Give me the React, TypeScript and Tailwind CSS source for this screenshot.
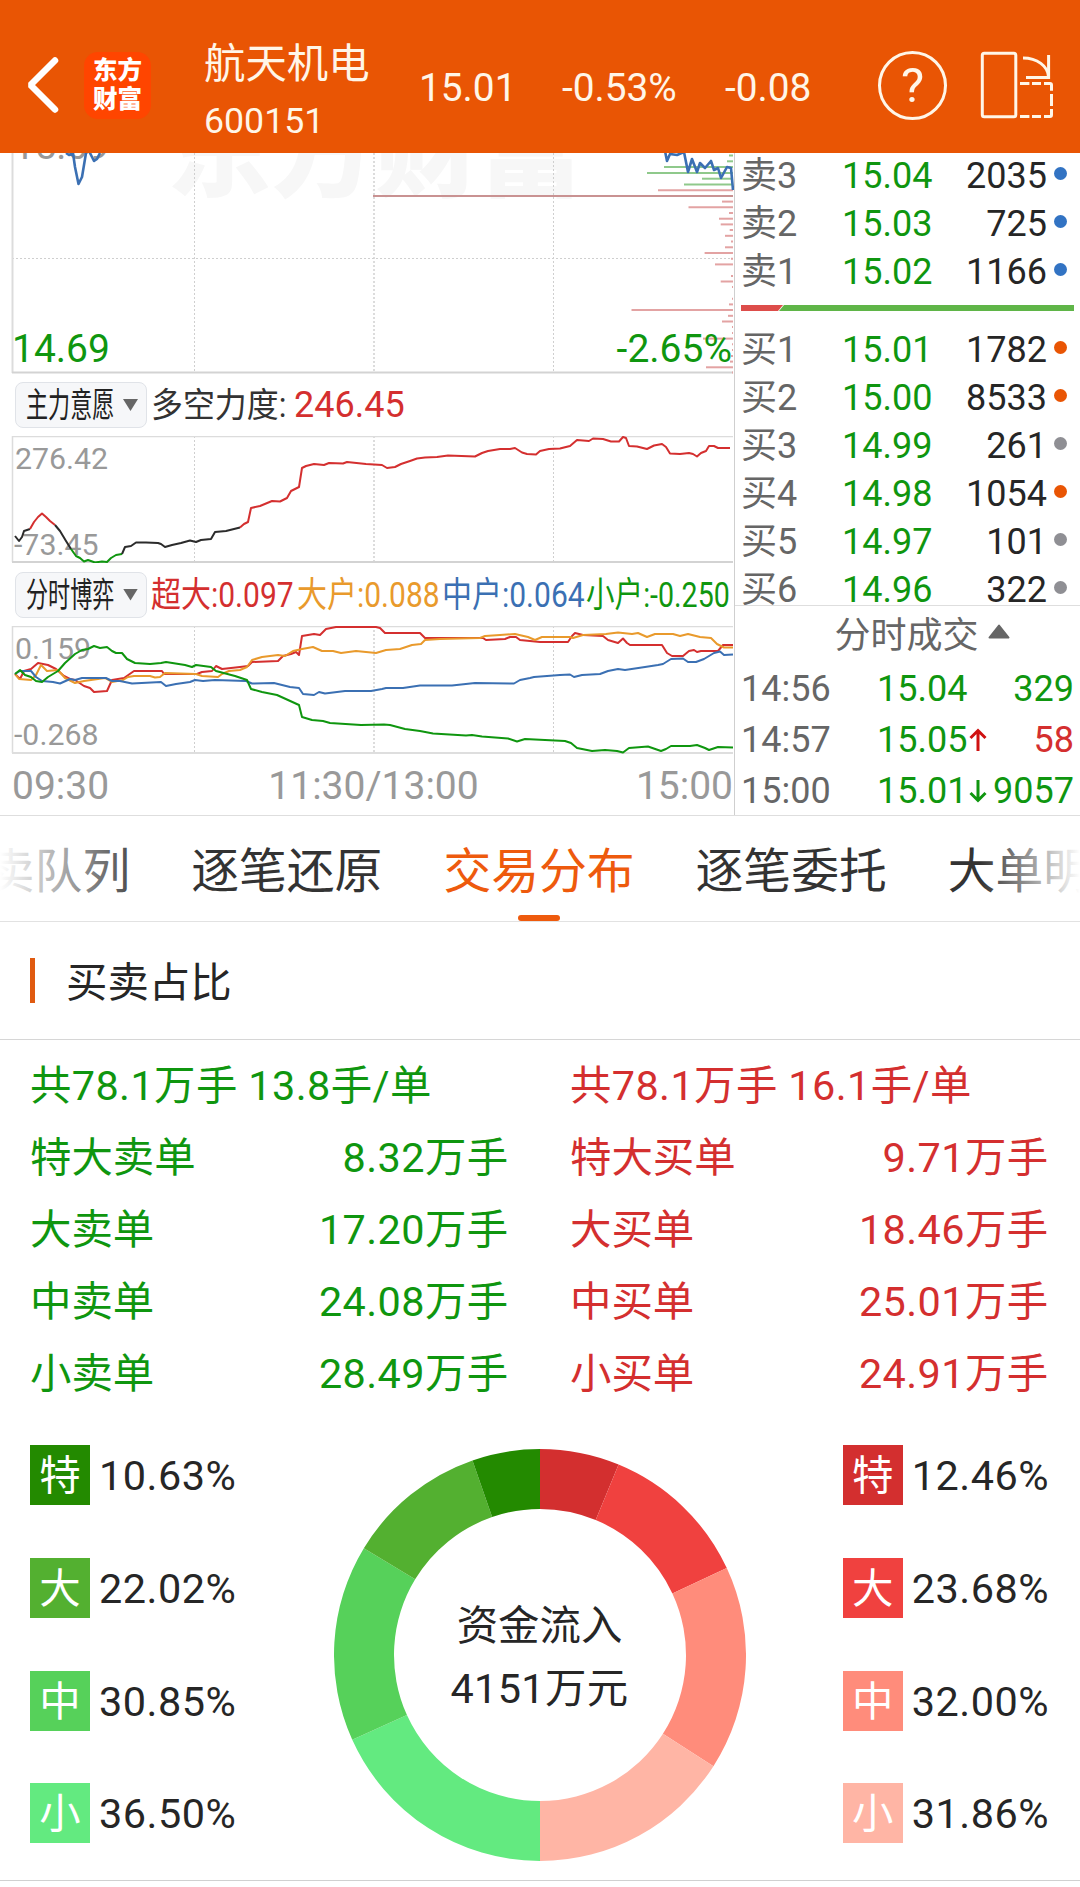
import React from 'react';

const GREEN = '#0f960f';
const RED = '#d42f2f';
const ORANGE = '#e99a2c';
const BLUE = '#3b70b3';

interface Quote {
  label: string;
  price: string;
  volume: string;
  dot: string;
}

const asks: Quote[] = [
  { label: '卖3', price: '15.04', volume: '2035', dot: 'bg-[#3273c3]' },
  { label: '卖2', price: '15.03', volume: '725', dot: 'bg-[#3273c3]' },
  { label: '卖1', price: '15.02', volume: '1166', dot: 'bg-[#3273c3]' },
];

const bids: Quote[] = [
  { label: '买1', price: '15.01', volume: '1782', dot: 'bg-[#e95504]' },
  { label: '买2', price: '15.00', volume: '8533', dot: 'bg-[#e95504]' },
  { label: '买3', price: '14.99', volume: '261', dot: 'bg-[#8f8f94]' },
  { label: '买4', price: '14.98', volume: '1054', dot: 'bg-[#e95504]' },
  { label: '买5', price: '14.97', volume: '101', dot: 'bg-[#8f8f94]' },
  { label: '买6', price: '14.96', volume: '322', dot: 'bg-[#8f8f94]' },
];

const trades = [
  { time: '14:56', price: '15.04', dir: '', volume: '329', color: 'text-[#0f960f]' },
  { time: '14:57', price: '15.05', dir: 'up', volume: '58', color: 'text-[#d42f2f]' },
  { time: '15:00', price: '15.01', dir: 'down', volume: '9057', color: 'text-[#0f960f]' },
];

const tabs = ['买卖队列', '逐笔还原', '交易分布', '逐笔委托', '大单明细'];

const sells = [
  ['特大卖单', '8.32万手'],
  ['大卖单', '17.20万手'],
  ['中卖单', '24.08万手'],
  ['小卖单', '28.49万手'],
];

const buys = [
  ['特大买单', '9.71万手'],
  ['大买单', '18.46万手'],
  ['中买单', '25.01万手'],
  ['小买单', '24.91万手'],
];

const sellShare = [
  { name: '特', value: 10.63, text: '10.63%', bg: 'bg-[#238a00]', fill: '#238a00' },
  { name: '大', value: 22.02, text: '22.02%', bg: 'bg-[#53b030]', fill: '#53b030' },
  { name: '中', value: 30.85, text: '30.85%', bg: 'bg-[#56d15a]', fill: '#56d15a' },
  { name: '小', value: 36.5, text: '36.50%', bg: 'bg-[#63ea80]', fill: '#63ea80' },
];

const buyShare = [
  { name: '特', value: 12.46, text: '12.46%', bg: 'bg-[#d32f2f]', fill: '#d32f2f' },
  { name: '大', value: 23.68, text: '23.68%', bg: 'bg-[#f0413f]', fill: '#f0413f' },
  { name: '中', value: 32.0, text: '32.00%', bg: 'bg-[#ff8c7b]', fill: '#ff8c7b' },
  { name: '小', value: 31.86, text: '31.86%', bg: 'bg-[#ffb5a5]', fill: '#ffb5a5' },
];

// [y, left end] of every price level bar, all of them end at x=733
const askBars = [[2.5, 729], [8.3, 727], [14, 664], [20, 647], [25.7, 702], [31.5, 684]];
const bidBars = [
  [37.2, 658], [43, 373], [48.6, 722], [54.3, 688.5], [60, 729], [65.7, 719], [71.4, 720.7],
  [77, 729.7], [82.8, 725], [88.5, 731], [94.3, 725], [100, 704.6], [105.7, 731], [111.4, 715],
  [123, 731], [128.5, 720.7], [134, 732], [145.7, 732], [151.4, 729], [157, 631.5], [162.8, 728],
  [168.5, 722], [174, 732], [180, 732], [185.6, 703], [191.3, 732], [197, 732], [203, 731],
  [208.6, 730], [214.3, 706], [219.5, 732],
];

const Header = () => (
  <header className="h-[153px] bg-[#e95504] text-[#fff6e8] flex items-end pl-[24px] pr-[24px]">
    <div className="flex items-center h-[68px] mb-[34px] w-full">
      <svg width="38" height="60" viewBox="0 0 38 60" fill="none" className="shrink-0">
        <path d="M31 5.5L6.5 30L31 54.5" stroke="#fff" strokeWidth="6.5" strokeLinecap="round" strokeLinejoin="bevel" />
      </svg>
      <div className="w-[67px] h-[67px] ml-[22px] shrink-0 rounded-[14px] bg-[#ff4500] text-white font-black text-[24.5px] leading-[29px] flex flex-col items-center justify-center">
        <span>东方</span>
        <span>财富</span>
      </div>
      <div className="ml-[53px] w-[215px] shrink-0 pt-[14px]">
        <div className="text-[41.4px] leading-[58px]">航天机电</div>
        <div className="text-[35.7px] leading-[56px]">600151</div>
      </div>
      <div className="w-[143px] shrink-0 text-[38.8px] mt-[6px]">15.01</div>
      <div className="w-[163px] shrink-0 text-[38.8px] mt-[6px]">-0.53%</div>
      <div className="w-[153px] shrink-0 text-[38.8px] mt-[6px]">-0.08</div>
      <div className="w-[69px] h-[69px] shrink-0 rounded-full border-[3px] border-[#fff6e8] flex items-center justify-center text-[49px] leading-none">
        ?
      </div>
      <svg width="76" height="70" viewBox="980 50 76 70" fill="none" stroke="#fff6e8" strokeWidth="3" className="ml-[32px] shrink-0">
        <rect x="983.3" y="53.3" width="33.5" height="63.5" rx="2" />
        <path d="M1024 58C1038 58 1049 66 1049.6 77" />
        <path d="M1049.6 55V77.5H1027" />
        <path d="M1021 83.5H1030.4M1033 83.5H1042M1045 83.5H1051Q1052.5 83.5 1052.5 85V90.7M1052.5 94V106M1052.5 109V115Q1052.5 116.5 1051 116.5H1045M1033 116.5H1042M1021 116.5H1030.4" />
      </svg>
    </div>
  </header>
);

const GridLines = ({ height }: { height: number }) => (
  <g stroke="#cfcfcf" strokeWidth="1" strokeDasharray="2 2">
    <path d={`M194.5 0V${height}`} />
    <path d={`M374 0V${height}`} stroke="#dcdcdc" strokeWidth="2" />
    <path d={`M553.5 0V${height}`} />
  </g>
);

const PriceChart = () => (
  <svg width="734" height="221" className="block shrink-0" fontFamily='Roboto, "Noto Sans CJK SC", sans-serif'>
    <text x="375" y="36" fontSize="104" fontWeight="900" fill="#f7f7f7" textAnchor="middle">东方财富</text>
    <GridLines height={219} />
    <path d="M12 105.5H733" stroke="#cfcfcf" strokeDasharray="2 2" />
    <path d="M12.5 0V220" stroke="#dcdcdc" strokeWidth="2" />
    <path d="M12 219.5H733" stroke="#d3d3d3" strokeWidth="2" />
    {askBars.map(([y, x]) => <path key={y} d={`M${x} ${y}H733`} stroke="#8fc98b" strokeWidth="2" />)}
    {bidBars.map(([y, x]) => <path key={y} d={`M${x} ${y}H733`} stroke="#e3a3a3" strokeWidth="2" />)}
    <path d="M373 43H733" stroke="#c99292" strokeWidth="2" />
    <text x="13" y="6" fontSize="38.5" fill="#999">15.09</text>
    <g fill="none" stroke={BLUE} strokeWidth="2.6" strokeLinejoin="round">
      <path d="M66 0L69 2L73 0L75 14L78.500 31L82 24L86 0L89 -2L92 4L94 8L97 6L100 0" />
      <path d="M665 -2L667 8L670 1L677 2L684 -1L688 19L692 6L697 19L700 10L705 15L711 8L714 17L718 15L721 25L727 14L731 15L733 37" />
    </g>
    <text x="12" y="209" fontSize="39" fill={GREEN}>14.69</text>
    <text x="732" y="209" fontSize="39" fill={GREEN} textAnchor="end">-2.65%</text>
  </svg>
);

const ForceChart = () => (
  <svg width="734" height="127" viewBox="0 436 734 127" className="block shrink-0" fontFamily="Roboto, sans-serif">
    <g transform="translate(0 436)"><GridLines height={126} /></g>
    <path d="M12.5 562V436.500H733" fill="none" stroke="#dcdcdc" strokeWidth="1.500" />
    <path d="M12 562H733" stroke="#d3d3d3" strokeWidth="2" />
    <text x="15" y="469" fontSize="30.300" fill="#999">276.42</text>
    <text x="14" y="554.5" fontSize="30.300" fill="#999">-73.45</text>
    <g fill="none" strokeWidth="2" strokeLinejoin="round">
      <path stroke="#2b2b2b" d="M15 536L19 541L22 537L24 531L30 529" />
      <path stroke={RED} d="M30 529L34 522L38 517L42 513.500L46 517L50 521L55 525" />
      <path stroke="#2b2b2b" d="M55 525L60 531L66 541L71 549" />
      <path stroke={GREEN} d="M71 549L76 556L80 558L84 561.500L88 560L95 562.500L102 561.500L107 562L111 558L116 555L122 554" />
      <path stroke="#2b2b2b" d="M122 554L125 547L131 546L136 542.500L146 542.500L158 543L161 544L165 547L172 545L181 543L190 540.500L196 542L201 540L211 539L215 532L226 531L240 527.500" />
      <path stroke={RED} d="M240 527.500L244 524L248 522L251 508L260 506L272 501L280 501.500L287 498L291 491L299 487L302 468L306 466L314 464L324 465L329 463L343 463.500L347 462L366 464L382 465L387 468L395 467L401 464L410 461L417 458.500L425 457.500L437 457L448 455.500L475 456.500L482 453L488 451L500 449L510 449L515 448L522 452.500L527 454L536 454.500L540 451L549 449L560 448.500L570 446L577 440L583 440.500L589 441L593 438.500L603 439L611 441.500L619 441.500L623 437L626 438L629 446L637 446.500L647 449L654 445.500L662 444L666 447L670 453.500L680 454L689 453L693 454L697 456.500L701 453L706 451L709 446L714 446L718 448L730 448" />
    </g>
  </svg>
);

const GameChart = () => (
  <svg width="734" height="128" viewBox="0 626 734 128" className="block shrink-0" fontFamily="Roboto, sans-serif">
    <g transform="translate(0 626)"><GridLines height={127} /></g>
    <path d="M12.5 753V626.500H733" fill="none" stroke="#dcdcdc" strokeWidth="1.500" />
    <path d="M12 753H733" stroke="#dedede" strokeWidth="2" />
    <text x="15" y="659" fontSize="30.300" fill="#999">0.159</text>
    <text x="14" y="745" fontSize="30.300" fill="#999">-0.268</text>
    <g fill="none" strokeWidth="2" strokeLinejoin="round">
      <path stroke={RED} d="M15 674L20 679L24 671L31 669L38 663L48 665L56 669L64 676L70 679L75 680L84 686L90 688L94 692L107 691L112 680L124 678L134 671L162 671L164 674L197 674L202 672L212 671L216 666L222 669L240 667L248 666L252 662L278 661L283 656L291 654L296 652L299 655L302 636L308 635L314 634L320 635L326 629L336 627L376 627L380 628L385 633L420 633L425 638L483 638L486 640L505 639L510 637L516 637L520 640L530 641L540 642L568 642L572 636L575 633L583 635L603 636L608 640L618 643L623 638.500L627 643L630 645L662 645L667 653L672 656L683 656L689 651L694 650L697 652L701 651L718 651L723 645L733 645" />
      <path stroke={ORANGE} d="M15 674L19 679L31 680L36 675L41 665L47 671L58 670L65 678L75 683L84 681L105 678L112 682L123 680L128 677L134 676L150 676L155 677.500L160 677L165 673L196 674L202 676L218 677L222 674L229 671L240 670L247 667L252 660L262 657L278 655L285 656L293 651L302 649L313 647L322 651L333 651L341 653L356 651L376 653L386 650L400 649L412 645L421 644L425 640L440 639L480 638L485 636L500 635L515 634L528 637L535 640L542 637L570 637L573 638L583 635L606 634L618 632.500L632 634L638 633L647 637L655 634L673 634L680 636L688 634L700 637L711 638L717 644L724 647.500L733 647.500" />
      <path stroke={BLUE} d="M15 674L20 671L31 671L36 677L42 681L53 682L60 683.500L70 679L75 680L82 678L106 678L112 681L120 681L132 683.500L161 682L166 686L176 684L190 682L195 680L203 681L215 680L246 681L252 683.500L274 683L290 687L299 688L303 694L314 695L319 692L325 693.500L345 691L371 691L382 689L386 688L403 688L420 685.500L435 685.500L452 685.500L475 683L514 683.500L520 680L530 678L534 677L560 675L570 674.500L574 677L582 675L600 674L608 671L618 669L625 670L645 667L658 665L663 664L671 659L683 658.500L688 662L696 662L704 659L714 653L720 651.500L724 655L733 654.500" />
      <path stroke={GREEN} d="M15 674L20 670L25 675L31 677L36 681L42 682L48 677L58 671L65 663L75 654L82 650L88 649L94 646L100 648L107 647L112 651L116 653L122 653L127 659L135 663L150 664L161 663L166 662L185 665L192 667L196 665L211 667L216 671L235 676L247 680L251 689L262 692L277 695L288 700L299 705L302 717L312 720L323 721L330 723L361 725L384 724.500L390 725L405 729L420 731L433 733.500L466 735.500L472 735L482 736.500L508 738.500L517 741.500L525 739L565 741L571 743L577 748L592 751L605 750L617 751L623 752.500L629 748L648 746.500L661 751L666 749L671 746L690 746L697 745L705 748L709 750L718 747L733 747.500" />
    </g>
  </svg>
);

const IndicatorButton = ({ name }: { name: string }) => (
  <div className="ml-[15px] w-[132px] h-[46px] shrink-0 flex items-center rounded-[8px] border border-[#e0e3e8] bg-[#f6f7f9] pl-[10px]">
    <div className="w-[97px] shrink-0">
      <span className="inline-block whitespace-nowrap origin-left scale-x-[0.64] text-[34.5px] leading-[44px] text-[#222]">{name}</span>
    </div>
    <div className="w-[15px] h-[12px] bg-[#666] [clip-path:polygon(0_0,100%_0,50%_100%)]"></div>
  </div>
);

const Charts = () => (
  <div className="w-[735px] shrink-0 flex flex-col border-r border-[#cfcfcf]">
    <PriceChart />
    <div className="h-[62px] flex items-center whitespace-nowrap text-[36px] leading-[60px]">
      <IndicatorButton name="主力意愿" />
      <div className="ml-[4px] w-[143px] shrink-0">
        <span className="inline-block origin-left scale-x-[0.925] text-[34.5px] text-[#333]">多空力度:</span>
      </div>
      <span className="text-[#d42f2f]">246.45</span>
    </div>
    <ForceChart />
    <div className="h-[63px] flex items-center whitespace-nowrap text-[35.500px] leading-[60px]">
      <IndicatorButton name="分时博弈" />
      <div className="ml-[4px] w-[146px] shrink-0 text-[#d42f2f]">
        <span className="inline-block origin-left scale-x-[0.845]">超大:0.097</span>
      </div>
      <div className="w-[145px] shrink-0 text-[#e99a2c]">
        <span className="inline-block origin-left scale-x-[0.845]">大户:0.088</span>
      </div>
      <div className="w-[144px] shrink-0 text-[#3b70b3]">
        <span className="inline-block origin-left scale-x-[0.845]">中户:0.064</span>
      </div>
      <div className="w-[144px] shrink-0 text-[#0f960f]">
        <span className="inline-block origin-left scale-x-[0.805]">小户:-0.250</span>
      </div>
    </div>
    <GameChart />
    <div className="h-[61px] flex justify-between pl-[12px] pr-[1px] text-[39px] leading-[64px] text-[#999]">
      <span>09:30</span>
      <span className="pl-[2px]">11:30/13:00</span>
      <span>15:00</span>
    </div>
  </div>
);

const QuoteRow = ({ quote }: { quote: Quote }) => (
  <div className="h-[48px] flex items-center text-[36px] leading-[48px] pl-[6px]">
    <span className="w-[101px] shrink-0 text-[#666]">{quote.label}</span>
    <span className="w-[100px] shrink-0 text-[#0f960f]">{quote.price}</span>
    <span className="w-[105px] shrink-0 text-right text-[#262626]">{quote.volume}</span>
    <span className={`w-[13px] h-[13px] rounded-full ml-[7px] -mt-[5px] ${quote.dot}`}></span>
  </div>
);

const OrderBook = () => (
  <div className="flex-1 flex flex-col">
    <div className="h-[453px] shrink-0 overflow-hidden border-b border-[#dedede]">
      <div className="-mt-[1px]">
        {asks.map((q) => <QuoteRow key={q.label} quote={q} />)}
      </div>
      <svg width="333" height="6" className="block ml-[6px] mt-[9px] mb-[15px]">
        <path d="M0 0H42L37 6H0Z" fill="#dd4d4a" />
        <path d="M43 0H333V6H38Z" fill="#5fb548" />
      </svg>
      {bids.map((q) => <QuoteRow key={q.label} quote={q} />)}
    </div>
    <div className="h-[58px] shrink-0 flex items-center justify-center gap-[9px] pl-[29px] pt-[2px] text-[36px] text-[#666]">
      <span>分时成交</span>
      <svg width="22" height="15" className="-mt-[10px]">
        <path d="M11 1.500L20.500 13.500H1.500Z" fill="#666" stroke="#666" strokeWidth="2" strokeLinejoin="round" />
      </svg>
    </div>
    {trades.map((t) => (
      <div key={t.time} className="h-[51px] shrink-0 flex items-center text-[36px] leading-[51px] pl-[6px] pr-[6px]">
        <span className="w-[136px] shrink-0 text-[#666]">{t.time}</span>
        <span className="w-[92px] shrink-0 text-[#0f960f]">{t.price}</span>
        {t.dir && (
          <svg
            width="18"
            height="24"
            viewBox="0 0 18 24"
            fill="none"
            stroke={t.dir === 'up' ? '#cf1111' : GREEN}
            strokeWidth="3"
            className={t.dir === 'up' ? 'shrink-0 -mt-[2px]' : 'shrink-0 -mt-[2px] rotate-180'}
          >
            <path d="M9 23V3M1.500 10L9 2.500L16.500 10" />
          </svg>
        )}
        <span className={`flex-1 text-right ${t.color}`}>{t.volume}</span>
      </div>
    ))}
  </div>
);

const TabBar = () => (
  <nav className="relative h-[106px] overflow-hidden border-b border-[#e2e2e2]">
    <div className="flex gap-[61px] -ml-[61px] text-[47.8px] whitespace-nowrap text-[#333]">
      {tabs.map((tab) => (
        <div key={tab} className={`relative w-[191.2px] h-[106px] pt-[3px] leading-[106px] shrink-0 ${tab === '交易分布' ? 'text-[#ee5a0d]' : ''}`}>
          {tab}
          {tab === '交易分布' && (
            <span className="absolute bottom-px left-1/2 -translate-x-1/2 w-[42px] h-[6px] rounded-[3px] bg-[#ee5a0d]"></span>
          )}
        </div>
      ))}
    </div>
    <div className="absolute left-0 top-0 h-[100px] w-[150px] bg-linear-to-r from-white to-transparent"></div>
    <div className="absolute right-0 top-0 h-[100px] w-[100px] bg-linear-to-l from-white to-transparent"></div>
  </nav>
);

const Totals = ({ summary, rows }: { summary: string; rows: string[][] }) => (
  <div className="w-[478.5px]">
    <div className="h-[72px] tracking-[0.4px]">{summary}</div>
    {rows.map(([name, value]) => (
      <div key={name} className="h-[72px] flex justify-between">
        <span>{name}</span>
        <span className="tracking-[0.4px]">{value}</span>
      </div>
    ))}
  </div>
);

const Legend = ({ items }: { items: typeof sellShare }) => (
  <div className="flex flex-col gap-[52.8px]">
    {items.map((item) => (
      <div key={item.name} className="h-[60px] flex items-center text-[41.4px]">
        <span className={`w-[60px] h-[60px] text-center text-white leading-[63px] ${item.bg}`}>{item.name}</span>
        <span className="ml-[9px] leading-[60px] pt-[2px] tracking-[0.5px] text-[#262626]">{item.text}</span>
      </div>
    ))}
  </div>
);

const slicePath = (from: number, to: number) => {
  const point = (r: number, pct: number) => {
    const a = (pct / 100) * 2 * Math.PI;
    return `${206 + r * Math.sin(a)} ${206 - r * Math.cos(a)}`;
  };
  return `M${point(206, from)}A206 206 0 0 1 ${point(206, to)}L${point(146, to)}A146 146 0 0 0 ${point(146, from)}Z`;
};

const Donut = () => {
  // Buys fill the right half clockwise, sells the left half from the bottom up
  const slices = [...buyShare, ...[...sellShare].reverse()];
  let at = 0;
  return (
    <div className="relative w-[412px] h-[412px]">
      <svg width="412" height="412" className="block">
        {slices.map((s) => {
          const from = at;
          at += s.value / 2;
          return <path key={s.fill} d={slicePath(from, at)} fill={s.fill} />;
        })}
      </svg>
      <div className="absolute inset-0 flex flex-col items-center justify-center pt-[6px] text-[41.4px] leading-[63px] text-[#262626]">
        <span>资金流入</span>
        <span className="tracking-[0.4px]">4151万元</span>
      </div>
    </div>
  );
};

const App: React.FC = () => {
  return (
    <div className="w-[1080px] h-[1887px] overflow-hidden bg-white font-[Roboto,'Noto_Sans_CJK_SC',sans-serif]">
      <Header />
      <div className="flex h-[663px] border-b border-[#dedede]">
        <Charts />
        <OrderBook />
      </div>
      <TabBar />

      <div className="h-[118px] flex items-center border-b border-[#d6d6d6] pl-[30px]">
        <div className="w-[5px] h-[45px] bg-[#e05a10]"></div>
        <h2 className="ml-[31px] pt-[6px] text-[41.4px] text-[#262626]">买卖占比</h2>
      </div>

      <div className="flex gap-[61.5px] pl-[30px] pt-[10px] text-[41.4px] leading-[72px]">
        <div className="text-[#0f960f]">
          <Totals summary="共78.1万手 13.8手/单" rows={sells} />
        </div>
        <div className="text-[#d42f2f]">
          <Totals summary="共78.1万手 16.1手/单" rows={buys} />
        </div>
      </div>

      <div className="flex justify-between pl-[30px] pr-[31px] h-[471px] pt-[35px] border-b border-[#d0d0d0]">
        <Legend items={sellShare} />
        <div className="mt-[4px]">
          <Donut />
        </div>
        <Legend items={buyShare} />
      </div>
    </div>
  );
};

export default App;
